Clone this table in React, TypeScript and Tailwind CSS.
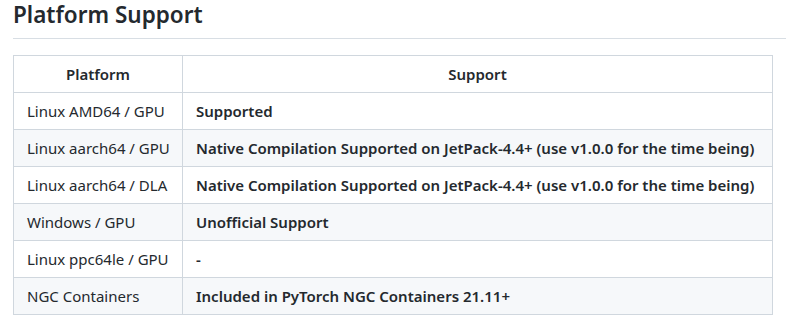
const rows: [string, string][] = [
  ["Linux AMD64 / GPU", "Supported"],
  ["Linux aarch64 / GPU", "Native Compilation Supported on JetPack-4.4+ (use v1.0.0 for the time being)"],
  ["Linux aarch64 / DLA", "Native Compilation Supported on JetPack-4.4+ (use v1.0.0 for the time being)"],
  ["Windows / GPU", "Unofficial Support"],
  ["Linux ppc64le / GPU", "-"],
  ["NGC Containers", "Included in PyTorch NGC Containers 21.11+"],
];

export default function App() {
  return (
    <div className="h-[324px] w-[786px] overflow-hidden bg-white pl-[13px] text-[15px] leading-[24px] text-[#24292e] font-['Noto_Sans',sans-serif]">
      <h2 className="border-b border-[#d8dee4] pb-[8px] text-[22.5px] font-semibold leading-[30px]">
        Platform Support
      </h2>
      <table className="mt-[16px] w-[760px] table-fixed border-collapse">
        <colgroup>
          <col className="w-[169px]" />
          <col />
        </colgroup>
        <thead>
          <tr className="bg-white">
            <th className="border border-[#d0d7de] px-[13px] py-[6px] text-center font-semibold">Platform</th>
            <th className="border border-[#d0d7de] px-[13px] py-[6px] text-center font-semibold">Support</th>
          </tr>
        </thead>
        <tbody>
          {rows.map(([platform, support], i) => (
            <tr key={platform} className={i % 2 === 0 ? "bg-white" : "bg-[#f6f8fa]"}>
              <td className="whitespace-nowrap border border-[#d0d7de] px-[13px] py-[6px] text-left">{platform}</td>
              <td className="whitespace-nowrap border border-[#d0d7de] px-[13px] py-[6px] text-left font-semibold">{support}</td>
            </tr>
          ))}
        </tbody>
      </table>
    </div>
  );
}
